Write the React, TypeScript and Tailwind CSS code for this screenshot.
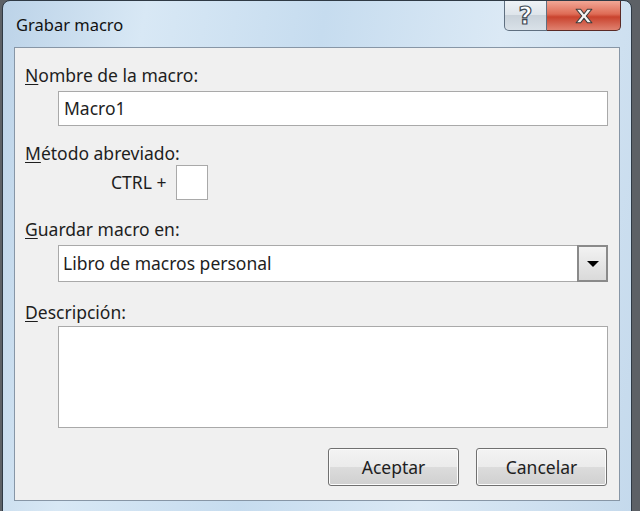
import React from 'react';

const font = { fontFamily: '"Noto Sans", "DejaVu Sans", sans-serif' };

const Label = ({ k, rest }: { k: string; rest: string }) => (
  <div className="text-[17.5px] leading-[20px] text-[#1e1e1e]">
    <span className="underline underline-offset-2 decoration-1">{k}</span>
    {rest}
  </div>
);

const VistaButton = ({ children }: { children: React.ReactNode }) => (
  <button className="w-[131px] h-[38px] rounded-[3px] border border-[#707070] bg-[linear-gradient(#f3f3f3_0%,#ebebeb_50%,#dcdcdc_50%,#d0d0d0_100%)] shadow-[inset_0_0_0_1px_#fcfcfc] text-[17.5px] text-[#1e1e1e]">
    {children}
  </button>
);

export default function App() {
  return (
    <div className="w-[640px] h-[511px] overflow-hidden bg-[#5d6166]" style={font}>
      <div className="ml-[2px] w-[630px] h-[530px] rounded-t-[8px] border border-[#2f3a45] bg-[linear-gradient(100deg,#bcd3e8_0%,#d8e8f5_20%,#c6dcef_45%,#dbe9f5_70%,#c4d9ec_100%)] flex flex-col">
        {/* title bar */}
        <div className="h-[46px] flex items-start justify-between pl-[13px] pr-[10px]">
          <div className="mt-[12px] text-[16.5px] leading-[24px] text-[#111]">Grabar macro</div>
          <div className="flex">
            <div className="w-[43px] h-[30px] rounded-bl-[5px] border border-t-0 border-[#5f6f80] bg-[linear-gradient(#eef2f6_0%,#dde4ea_50%,#c9d2da_50%,#d9e1e8_100%)] flex items-center justify-center">
              <span className="text-[24px] leading-none font-bold text-white [-webkit-text-stroke:1.2px_#3f4a55]" style={{ fontFamily: '"DejaVu Sans", sans-serif' }}>?</span>
            </div>
            <div className="w-[74px] h-[30px] rounded-br-[5px] border border-t-0 border-l-0 border-[#5a2a26] bg-[linear-gradient(#f2a796_0%,#de6b55_45%,#c9432e_55%,#e08270_100%)] flex items-center justify-center">
              <svg width="24" height="18" viewBox="0 0 20 16">
                <path d="M3 2 L7 2 L10 6 L13 2 L17 2 L12 8 L17 14 L13 14 L10 10 L7 14 L3 14 L8 8 Z" fill="#f4f4f4" stroke="#3d3d3d" strokeWidth="1" strokeLinejoin="round" />
              </svg>
            </div>
          </div>
        </div>
        {/* client area */}
        <div className="ml-[11px] w-[606px] h-[454px] border border-[#8796a6] bg-[#f0f0f0] pl-[10px] pr-[11px] pt-[17px]">
          <Label k="N" rest="ombre de la macro:" />
          <div className="ml-[33px] mt-[6px] h-[35px] border border-[#a9a9a9] bg-white flex items-center px-[5px] text-[17.5px] text-[#1e1e1e]">
            Macro1
          </div>
          <div className="mt-[17px]">
            <Label k="M" rest="étodo abreviado:" />
          </div>
          <div className="mt-[2px] ml-[86px] flex items-center gap-[10px]">
            <span className="text-[17.5px] text-[#1e1e1e]">CTRL +</span>
            <div className="w-[32px] h-[35px] border border-[#a9a9a9] bg-white" />
          </div>
          <div className="mt-[19px]">
            <Label k="G" rest="uardar macro en:" />
          </div>
          <div className="ml-[33px] mt-[6px] h-[37px] border border-[#a9a9a9] bg-white flex items-center">
            <span className="flex-1 px-[4px] text-[17.5px] text-[#1e1e1e]">Libro de macros personal</span>
            <div className="w-[31px] h-[37px] -mr-px border-2 border-[#8a8a8a] bg-[linear-gradient(#f2f2f2,#dadada)] flex items-center justify-center">
              <svg width="12" height="8" viewBox="0 0 12 8">
                <path d="M0 1 H12 L6 7 Z" fill="#000" />
              </svg>
            </div>
          </div>
          <div className="mt-[20px]">
            <Label k="D" rest="escripción:" />
          </div>
          <div className="ml-[33px] mt-[4px] h-[102px] border border-[#a9a9a9] bg-white" />
          <div className="mt-[20px] flex justify-end gap-[17px] pr-px">
            <VistaButton>Aceptar</VistaButton>
            <VistaButton>Cancelar</VistaButton>
          </div>
        </div>
      </div>
    </div>
  );
}
